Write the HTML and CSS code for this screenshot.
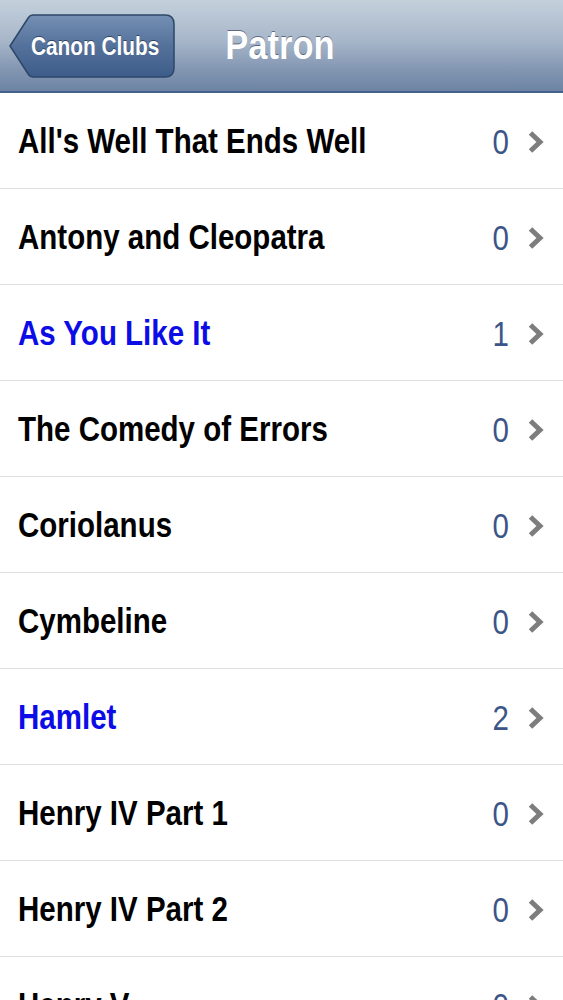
FILE: index.html
```html
<!DOCTYPE html>
<html>
<head>
<meta charset="utf-8">
<link rel="stylesheet" href="styles.css">
</head>
<body>
<header class="navbar">
  <div class="nav-left">
    <a class="back">
      <svg class="back-shape" width="166" height="64" viewBox="0 0 166 64">
        <defs>
          <linearGradient id="bg" x1="0" y1="0" x2="0" y2="1">
            <stop offset="0" stop-color="#7590b4"/>
            <stop offset="0.5" stop-color="#54719b"/>
            <stop offset="1" stop-color="#3d5c89"/>
          </linearGradient>
        </defs>
        <path d="M1 32 L19.5 3.5 Q21 1 24 1 L156 1 Q165 1 165 10 L165 54 Q165 63 156 63 L24 63 Q21 63 19.5 60.5 Z" fill="url(#bg)" stroke="#2d4769" stroke-width="1.5"/>
      </svg>
      <span class="back-label">Canon Clubs</span>
    </a>
  </div>
  <h1 class="title"><span>Patron</span></h1>
  <div></div>
</header>
<ul class="list">
  <li class="row"><span class="name">All's Well That Ends Well</span><span class="count">0</span><svg class="chev" width="18" height="24" viewBox="0 0 18 24"><path d="M3.5 3 L13 12 L3.5 21" fill="none" stroke="#7d7d7d" stroke-width="5"/></svg></li>
  <li class="row"><span class="name">Antony and Cleopatra</span><span class="count">0</span><svg class="chev" width="18" height="24" viewBox="0 0 18 24"><path d="M3.5 3 L13 12 L3.5 21" fill="none" stroke="#7d7d7d" stroke-width="5"/></svg></li>
  <li class="row active"><span class="name">As You Like It</span><span class="count">1</span><svg class="chev" width="18" height="24" viewBox="0 0 18 24"><path d="M3.5 3 L13 12 L3.5 21" fill="none" stroke="#7d7d7d" stroke-width="5"/></svg></li>
  <li class="row"><span class="name">The Comedy of Errors</span><span class="count">0</span><svg class="chev" width="18" height="24" viewBox="0 0 18 24"><path d="M3.5 3 L13 12 L3.5 21" fill="none" stroke="#7d7d7d" stroke-width="5"/></svg></li>
  <li class="row"><span class="name">Coriolanus</span><span class="count">0</span><svg class="chev" width="18" height="24" viewBox="0 0 18 24"><path d="M3.5 3 L13 12 L3.5 21" fill="none" stroke="#7d7d7d" stroke-width="5"/></svg></li>
  <li class="row"><span class="name">Cymbeline</span><span class="count">0</span><svg class="chev" width="18" height="24" viewBox="0 0 18 24"><path d="M3.5 3 L13 12 L3.5 21" fill="none" stroke="#7d7d7d" stroke-width="5"/></svg></li>
  <li class="row active"><span class="name">Hamlet</span><span class="count">2</span><svg class="chev" width="18" height="24" viewBox="0 0 18 24"><path d="M3.5 3 L13 12 L3.5 21" fill="none" stroke="#7d7d7d" stroke-width="5"/></svg></li>
  <li class="row"><span class="name">Henry IV Part 1</span><span class="count">0</span><svg class="chev" width="18" height="24" viewBox="0 0 18 24"><path d="M3.5 3 L13 12 L3.5 21" fill="none" stroke="#7d7d7d" stroke-width="5"/></svg></li>
  <li class="row"><span class="name">Henry IV Part 2</span><span class="count">0</span><svg class="chev" width="18" height="24" viewBox="0 0 18 24"><path d="M3.5 3 L13 12 L3.5 21" fill="none" stroke="#7d7d7d" stroke-width="5"/></svg></li>
  <li class="row"><span class="name">Henry V</span><span class="count">0</span><svg class="chev" width="18" height="24" viewBox="0 0 18 24"><path d="M3.5 3 L13 12 L3.5 21" fill="none" stroke="#7d7d7d" stroke-width="5"/></svg></li>
</ul>
</body>
</html>
```
FILE: styles.css
```css
html, body {
  margin: 0;
  padding: 0;
  background: #ffffff;
  overflow: hidden;
}
body {
  font-family: "Liberation Sans", Arial, Helvetica, sans-serif;
  width: 563px;
  height: 1000px;
}
.navbar {
  height: 91px;
  border-bottom: 2px solid #44618b;
  background: linear-gradient(to bottom, #c4d0dc 0%, #a7b6c9 45%, #8497b3 75%, #6c84a4 100%);
  display: grid;
  grid-template-columns: 1fr auto 1fr;
  align-items: center;
}
.nav-left {
  display: flex;
  align-items: center;
  padding-left: 9px;
}
.back {
  position: relative;
  width: 166px;
  height: 64px;
  display: flex;
  align-items: center;
  justify-content: flex-start;
  box-sizing: border-box;
  padding-left: 22px;
}
.back-shape {
  position: absolute;
  left: 0;
  top: 0;
}
.back-label {
  position: relative;
  color: #ffffff;
  font-weight: bold;
  font-size: 20.8px;
  display: inline-block;
  transform: scaleY(1.25);
  text-shadow: 0 -1px 0 rgba(30, 45, 70, 0.7);
}
.title {
  margin: 0;
  color: #ffffff;
  font-weight: bold;
  font-size: 34.5px;
  text-shadow: 0 -1px 0 rgba(40, 50, 70, 0.6);
}
.title span {
  display: inline-block;
  transform: scaleY(1.2);
  margin-left: -3px;
}
.list {
  list-style: none;
  margin: 0;
  padding: 0;
}
.row {
  height: 95px;
  border-bottom: 1px solid #e0e0e0;
  display: flex;
  align-items: center;
  padding: 0 18px 0 18px;
  box-sizing: content-box;
}
.name {
  flex: 1;
  font-weight: bold;
  font-size: 29.5px;
  color: #000000;
  display: inline-block;
  transform: scaleY(1.17);
  transform-origin: left center;
  white-space: nowrap;
}
.row.active .name {
  color: #0c0ce6;
}
.count {
  font-size: 29.5px;
  color: #3b5588;
  display: inline-block;
  transform: scaleY(1.17);
  margin-top: 3px;
}
.chev {
  margin-left: 18px;
  margin-top: 3px;
}
```
